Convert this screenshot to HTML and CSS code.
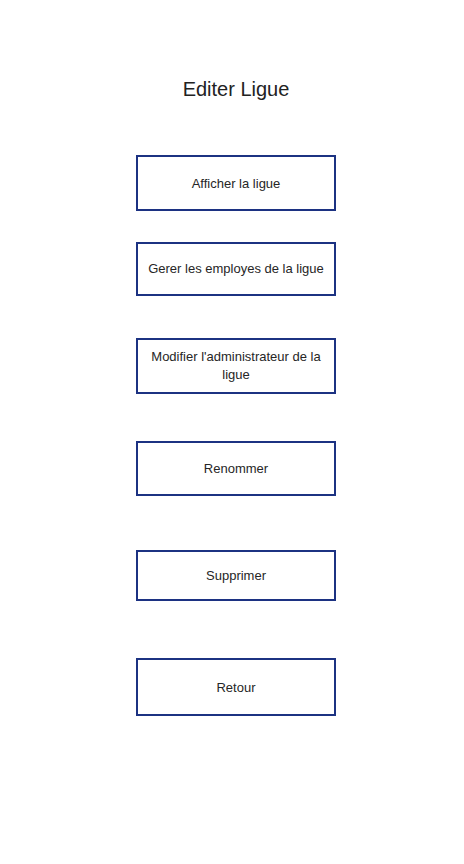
FILE: index.html
```html
<!DOCTYPE html>
<html lang="fr">
<head>
<meta charset="utf-8">
<title>Editer Ligue</title>
<link rel="stylesheet" href="styles.css">
</head>
<body>
<main class="page">
  <h1 class="title">Editer Ligue</h1>
  <nav class="menu">
    <button class="menu-btn">Afficher la ligue</button>
    <button class="menu-btn">Gerer les employes de la ligue</button>
    <button class="menu-btn">Modifier l'administrateur de la ligue</button>
    <button class="menu-btn">Renommer</button>
    <button class="menu-btn">Supprimer</button>
    <button class="menu-btn">Retour</button>
  </nav>
</main>
</body>
</html>
```
FILE: styles.css
```css
html, body {
  margin: 0;
  padding: 0;
  background: #ffffff;
}

.page {
  width: 464px;
  display: flex;
  flex-direction: column;
  align-items: center;
  padding-top: 78px;
  font-family: "Liberation Sans", Arial, sans-serif;
}

.title {
  margin: 0 0 0 8px;
  font-size: 20px;
  font-weight: normal;
  line-height: 23px;
  color: #222222;
}

.menu {
  display: flex;
  flex-direction: column;
  align-items: center;
  margin-left: 8px;
  margin-top: 54px;
}

.menu-btn {
  box-sizing: border-box;
  width: 200px;
  display: flex;
  align-items: center;
  justify-content: center;
  padding: 0 6px;
  border: 2px solid #1c3282;
  background: #ffffff;
  font-family: "Liberation Sans", Arial, sans-serif;
  font-size: 13px;
  line-height: 18px;
  color: #262626;
  text-align: center;
}

.menu-btn:nth-child(1) { height: 56px; padding-top: 2px; }
.menu-btn:nth-child(2) { height: 54px; margin-top: 31px; }
.menu-btn:nth-child(3) { height: 56px; margin-top: 42px; }
.menu-btn:nth-child(4) { height: 55px; margin-top: 47px; }
.menu-btn:nth-child(5) { height: 51px; margin-top: 54px; }
.menu-btn:nth-child(6) { height: 58px; margin-top: 57px; padding-top: 2px; }
```
